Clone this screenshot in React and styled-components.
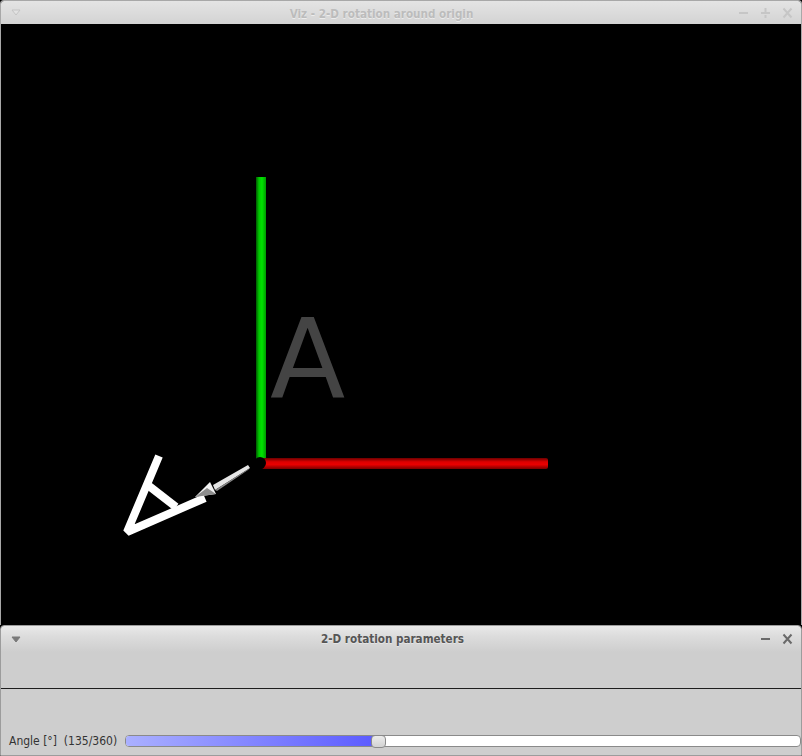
import React from "react";
import styled, { createGlobalStyle } from "styled-components";

const GlobalStyle = createGlobalStyle`
  html, body { margin: 0; padding: 0; background: #000; }
  #root { width: 802px; height: 756px; overflow: hidden; }
  * { box-sizing: border-box; }
`;

const Desktop = styled.div`
  display: flex;
  flex-direction: column;
  width: 802px;
  height: 756px;
  background: #000;
`;

const Window = styled.div`
  display: flex;
  flex-direction: column;
  width: 802px;
  border: 1px solid ${(p) => (p.$active ? "#9c9c9c" : "#a8a8a8")};
  border-bottom-width: ${(p) => (p.$active ? "1px" : "0")};
  border-radius: 4px 4px 0 0;
  overflow: hidden;
  height: ${(p) => p.$height}px;
  flex: none;
`;

const TitleBar = styled.div`
  flex: none;
  height: ${(p) => p.$h}px;
  display: flex;
  align-items: center;
  padding: 0 8px 0 10px;
  background: ${(p) =>
    p.$active
      ? "linear-gradient(#e9e9e9, #dcdcdc 40%, #cecece)"
      : "linear-gradient(#e4e4e4, #d3d3d3)"};
`;

const Title = styled.div`
  flex: 1;
  text-align: center;
  font-family: "DejaVu Sans Condensed", "DejaVu Sans", sans-serif;
  font-weight: bold;
  font-size: 11.6px;
  color: ${(p) => (p.$active ? "#555555" : "#bcbcbc")};
  text-shadow: ${(p) => (p.$active ? "0 1px 0 rgba(255,255,255,0.4)" : "0 1px 0 rgba(255,255,255,0.5)")};
  margin-top: ${(p) => p.$offset || 0}px;
`;

const MenuButton = styled.div`
  display: flex;
  width: 14px;
`;

const Buttons = styled.div`
  display: flex;
  gap: 11px;
  align-items: center;
`;

const Canvas = styled.div`
  flex: 1;
  background: #000;
  display: flex;
`;

const Panel = styled.div`
  flex: 1;
  display: flex;
  flex-direction: column;
  background: #cecece;
`;

const Spacer = styled.div`
  height: 36px;
  flex: none;
`;

const Divider = styled.div`
  height: 1px;
  background: #1e1e1e;
  flex: none;
`;

const Controls = styled.div`
  flex: 1;
  display: flex;
  align-items: flex-end;
  padding: 0 0 7px 8px;
`;

const SliderRow = styled.div`
  display: flex;
  align-items: center;
  width: 100%;
  height: 14px;
`;

const Label = styled.div`
  width: 116px;
  flex: none;
  font-family: "DejaVu Sans Condensed", "DejaVu Sans", sans-serif;
  font-size: 12px;
  color: #333;
  white-space: nowrap;
`;

const Track = styled.div`
  position: relative;
  flex: 1;
  height: 12px;
  border: 1px solid #8a8a8a;
  border-radius: 4px;
  background: #fff;
`;

const Fill = styled.div`
  height: 100%;
  border-radius: 3px 0 0 3px;
  background: linear-gradient(90deg, #aab0ff, #5a5aff);
`;

const Thumb = styled.div`
  position: absolute;
  top: -1px;
  width: 15px;
  height: 13px;
  margin-left: -8px;
  border: 1px solid #8a8a8a;
  border-radius: 4px;
  background: linear-gradient(#ececec, #d2d2d2);
`;

function MenuArrow({ color, fill }) {
  return (
    <svg width="10" height="7" viewBox="0 0 10 7">
      <polygon points="1,1 9,1 5,6" fill={fill} stroke={color} strokeWidth="1" />
    </svg>
  );
}

function MinIcon({ color }) {
  return (
    <svg width="11" height="12" viewBox="0 0 11 12">
      <rect x="1" y="5" width="9" height="2" fill={color} />
    </svg>
  );
}
function MaxIcon({ color }) {
  return (
    <svg width="11" height="12" viewBox="0 0 11 12">
      <rect x="1" y="5" width="9" height="2" fill={color} />
      <rect x="4.5" y="1" width="2" height="4" fill={color} />
      <rect x="4.5" y="8" width="2" height="3" fill={color} />
    </svg>
  );
}
function CloseIcon({ color }) {
  return (
    <svg width="11" height="12" viewBox="0 0 11 12">
      <path d="M1.5 1.5 L9.5 10.5 M9.5 1.5 L1.5 10.5" stroke={color} strokeWidth="2" />
    </svg>
  );
}

function Scene() {
  return (
    <svg width="800" height="601" viewBox="0 0 800 601">
      <defs>
        <linearGradient id="gy" x1="0" x2="1" y1="0" y2="0">
          <stop offset="0" stopColor="#005a00" />
          <stop offset="0.3" stopColor="#00c800" />
          <stop offset="0.6" stopColor="#00e400" />
          <stop offset="1" stopColor="#009a00" />
        </linearGradient>
        <linearGradient id="rx" x1="0" x2="0" y1="0" y2="1">
          <stop offset="0" stopColor="#6a0000" />
          <stop offset="0.35" stopColor="#dd0000" />
          <stop offset="0.6" stopColor="#e80000" />
          <stop offset="1" stopColor="#7a0000" />
        </linearGradient>
      </defs>
      <text
        x="269"
        y="374"
        fontFamily="DejaVu Sans, sans-serif"
        fontSize="110"
        fill="#444444"
      >
        A
      </text>
      <rect x="255" y="153" width="10" height="287" fill="url(#gy)" />
      <rect x="261" y="434" width="286" height="11" rx="2" fill="url(#rx)" />
      <circle cx="259" cy="439" r="6" fill="#000" />
      <g stroke="#fff" strokeWidth="8" fill="none" strokeLinejoin="bevel" strokeLinecap="butt">
        <polyline points="158,432 126,508 204,474" />
        <line x1="148" y1="462" x2="175" y2="483" />
      </g>
      <polygon points="212,461 247,441 249,444 214,466" fill="#e6e6e6" />
      <polygon points="214,466 249,444 247,446 216,467" fill="#8a8a8a" />
      <polygon points="194,473 209,458 215,470" fill="#f2f2f2" />
      <polygon points="194,473 206,464 215,470" fill="#8e8e8e" />
    </svg>
  );
}

export default function App() {
  const value = 135;
  const max = 360;
  const pct = (value / max) * 100;
  return (
    <Desktop>
      <GlobalStyle />
      <Window $height={625}>
        <TitleBar $h={23}>
          <MenuButton>
            <MenuArrow color="#c4c4c4" fill="#e2e2e2" />
          </MenuButton>
          <Title $offset={2}>Viz - 2-D rotation around origin</Title>
          <Buttons>
            <MinIcon color="#c6c6c6" />
            <MaxIcon color="#c6c6c6" />
            <CloseIcon color="#c6c6c6" />
          </Buttons>
        </TitleBar>
        <Canvas>
          <Scene />
        </Canvas>
      </Window>
      <Window $active $height={131}>
        <TitleBar $active $h={26}>
          <MenuButton>
            <MenuArrow color="#7a7a7a" fill="#7a7a7a" />
          </MenuButton>
          <Title $active>2-D rotation parameters</Title>
          <Buttons>
            <MinIcon color="#6a6a6a" />
            <CloseIcon color="#6a6a6a" />
          </Buttons>
        </TitleBar>
        <Panel>
          <Spacer />
          <Divider />
          <Controls>
            <SliderRow>
              <Label>Angle [°]&nbsp;&nbsp;(135/360)</Label>
              <Track>
                <Fill style={{ width: `${pct}%` }} />
                <Thumb style={{ left: `${pct}%` }} />
              </Track>
            </SliderRow>
          </Controls>
        </Panel>
      </Window>
    </Desktop>
  );
}
